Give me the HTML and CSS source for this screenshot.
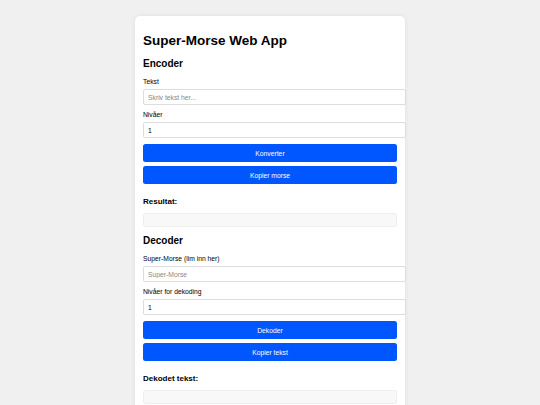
FILE: index.html
```html
<!DOCTYPE html>
<html lang="no">
<head>
    <meta charset="UTF-8">
    <meta name="viewport" content="width=device-width, initial-scale=1.0">
    <title>Super-Morse Web App</title>
    <link rel="stylesheet" href="styles.css">
</head>
<body>
    <div class="container">
        <h1>Super-Morse Web App</h1>

        <!-- Encoder -->
        <h2>Encoder</h2>
        <div class="field">
            <label for="textInput">Tekst</label>
            <input type="text" id="textInput" placeholder="Skriv tekst her...">
        </div>
        <div class="field">
            <label for="levelInput">Nivåer</label>
            <input type="number" id="levelInput" value="1">
        </div>
        <button class="btn">Konverter</button>
        <button class="btn">Kopier morse</button>
        <h3>Resultat:</h3>
        <div class="output" id="morseOutput"></div>

        <!-- Decoder -->
        <h2>Decoder</h2>
        <div class="field">
            <label for="morseInput">Super-Morse (lim inn her)</label>
            <input type="text" id="morseInput" placeholder="Super-Morse">
        </div>
        <div class="field">
            <label for="decodeLevel">Nivåer for dekoding</label>
            <input type="number" id="decodeLevel" value="1">
        </div>
        <button class="btn">Dekoder</button>
        <button class="btn">Kopier tekst</button>
        <h3>Dekodet tekst:</h3>
        <div class="output" id="textOutput"></div>
    </div>
</body>
</html>
```

FILE: styles.css
```css
/* General styling */
body {
    font-family: "Liberation Sans", Arial, sans-serif;
    background-color: #f0f0f0;
    margin: 0;
    padding: 16px 0 0;
    color: #000;
}
/* Card */
.container {
    width: 254px;
    margin: 0 auto;
    padding: 8px;
    background-color: #ffffff;
    border-radius: 5px;
    box-shadow: 0 0 5px rgba(0, 0, 0, 0.08);
}
h1 {
    font-size: 13.5px;
    line-height: 15.5px;
    margin: 9px 0 9.5px;
}
h2 {
    font-size: 10px;
    line-height: 12px;
    margin: 8.3px 0;
}
h3 {
    font-size: 8px;
    line-height: 9px;
    margin: 12.5px 0 7.5px;
}
/* Form fields */
.field {
    margin-bottom: 6px;
}
.field label {
    display: block;
    font-size: 6.75px;
    line-height: 8px;
    margin-bottom: 2.5px;
}
.field input {
    display: block;
    box-sizing: border-box;
    width: calc(100% + 8.5px);
    height: 16.5px;
    padding: 0 4px;
    margin: 0;
    font-family: inherit;
    font-size: 6.75px;
    color: #000;
    border: 1px solid #dddddd;
    border-radius: 2px;
}
.field input::placeholder {
    color: #888;
}
.field input::-webkit-inner-spin-button {
    display: none;
}
/* Buttons */
.btn {
    display: block;
    width: 100%;
    height: 18px;
    margin: 0 0 4px;
    padding: 0;
    font-family: inherit;
    font-size: 6.75px;
    color: #ffffff;
    background-color: #0056ff;
    border: none;
    border-radius: 2.5px;
    cursor: pointer;
}
/* Output boxes */
.output {
    height: 13.5px;
    box-sizing: border-box;
    background-color: #f8f8f8;
    border: 1px solid #eeeeee;
    border-radius: 2.5px;
}
```
